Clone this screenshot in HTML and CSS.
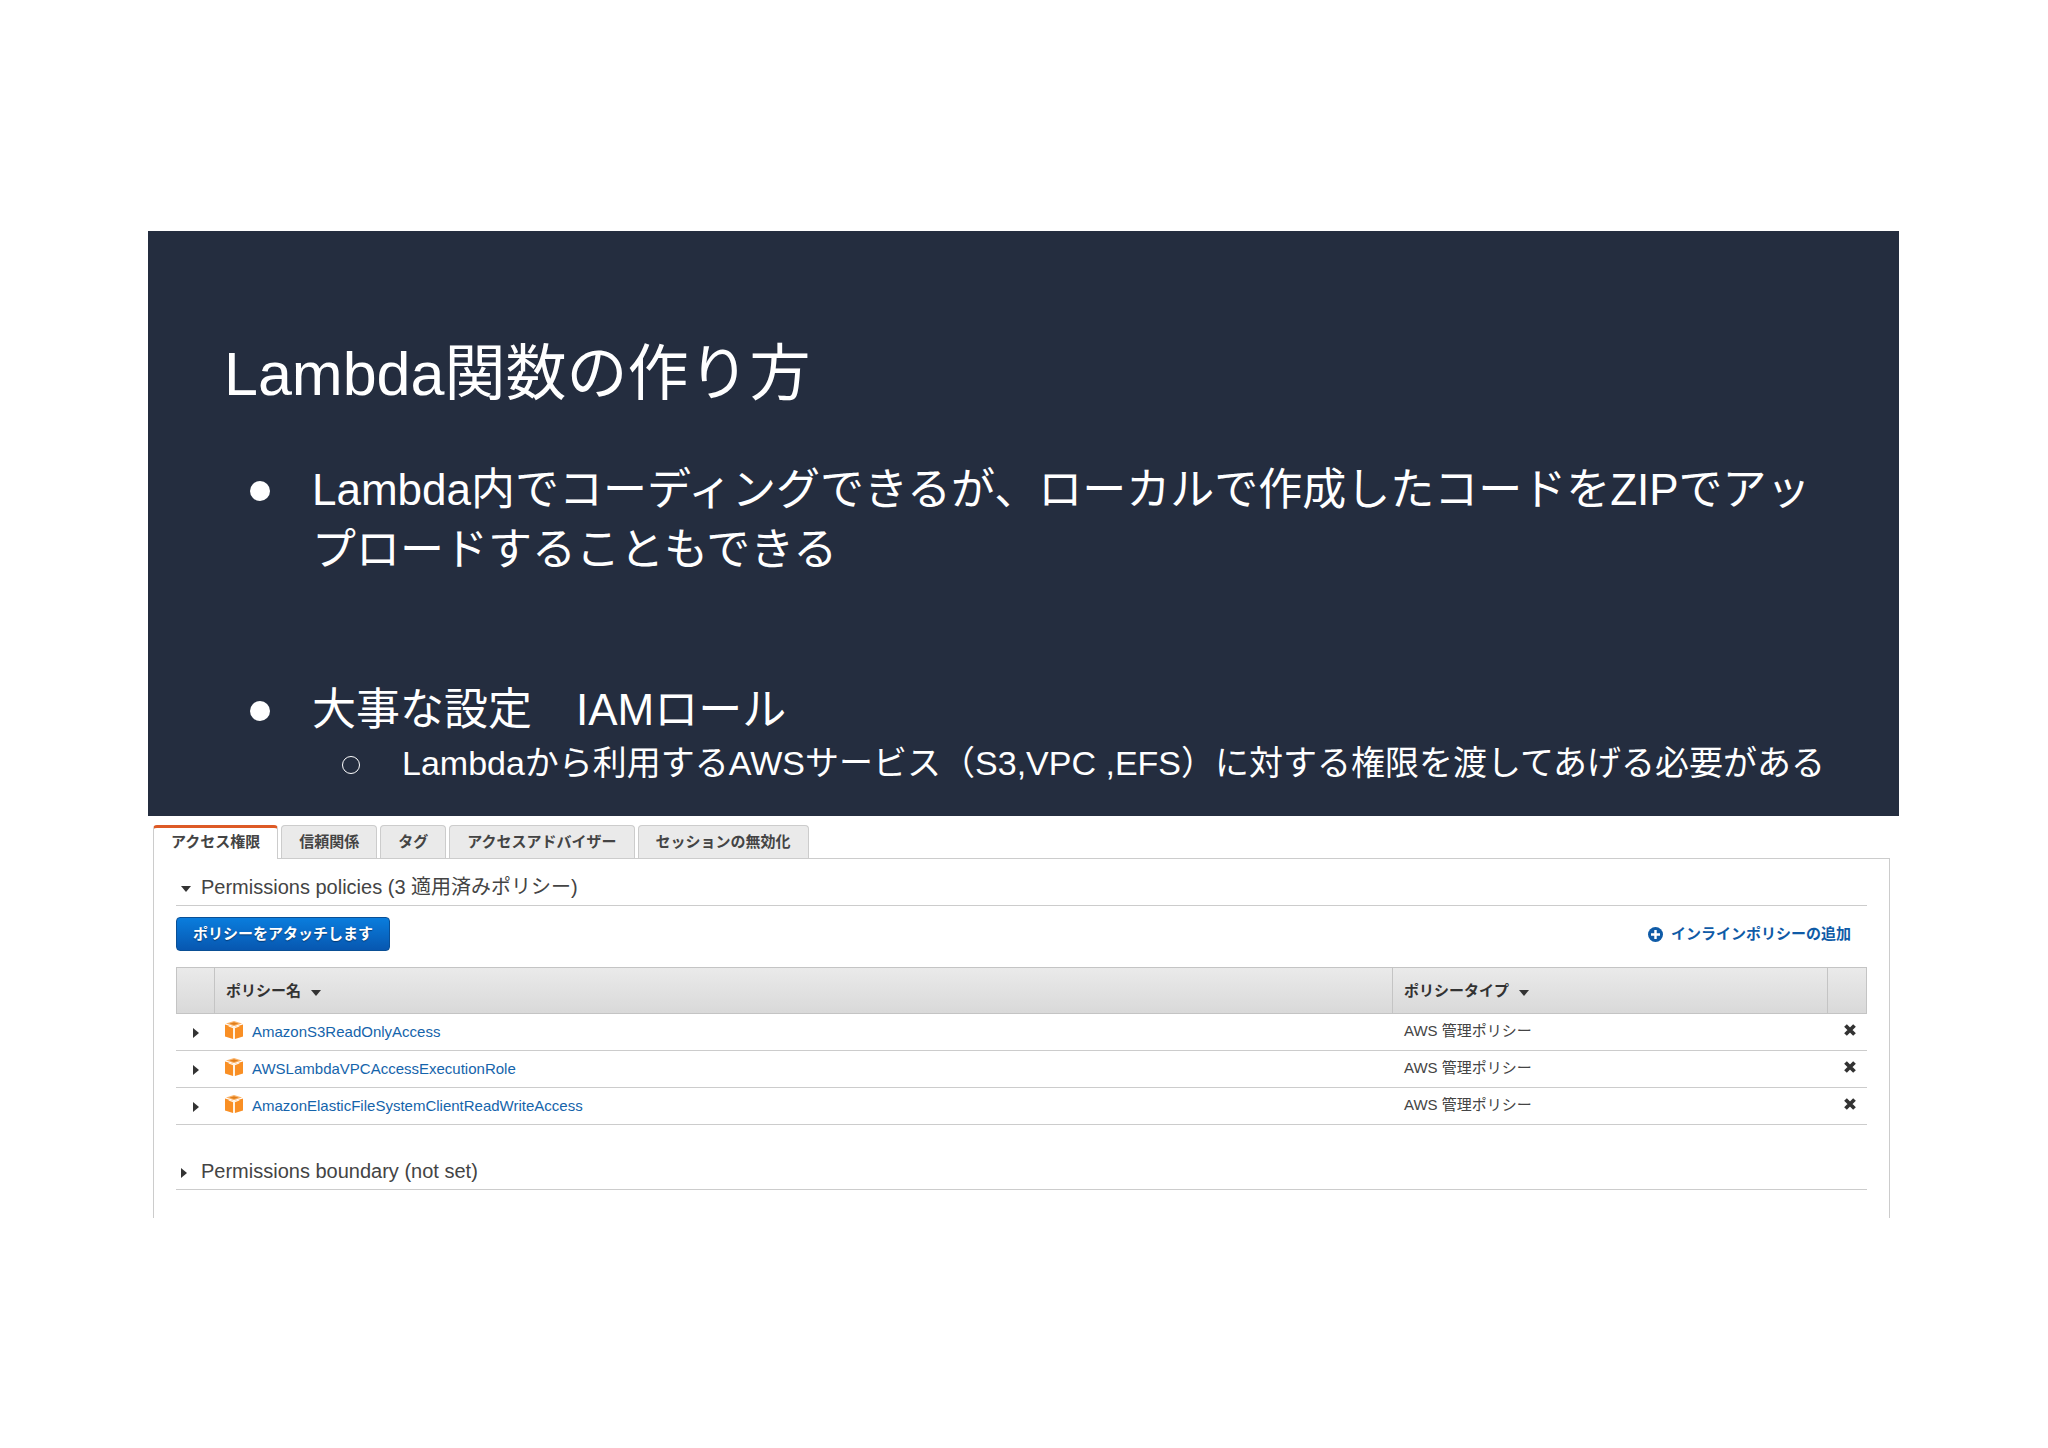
FILE: index.html
```html
<!DOCTYPE html>
<html lang="ja">
<head>
    <meta charset="UTF-8">
    <meta name="viewport" content="width=device-width, initial-scale=1.0">
    <title>Lambda関数の作り方</title>
    <link rel="stylesheet" href="styles.css">
</head>
<body>
    <svg class="sprite" aria-hidden="true">
        <symbol id="cube" viewBox="0 0 18 18">
            <path fill="#fbb46a" d="M9 0l8 2.6L9 5.2 1 2.6z"/>
            <path fill="#e07f1c" d="M9 1.2l4.6 1.5L9 4.1 4.4 2.7z"/>
            <path fill="#f98f24" d="M0 3.4l8 2.4V18L0 15.4z"/>
            <path fill="#f98f24" d="M18 3.4l-8 2.4V18l8-2.6z"/>
            <path fill="#fff3e4" d="M3.6 4.5L9 6.1l5.4-1.6v1.1L10 7.2V18H8V7.2L3.6 5.6z"/>
        </symbol>
        <symbol id="cross" viewBox="0 0 12 12">
            <path stroke="#333" stroke-width="3.8" d="M1.5 1.5l9 9M10.5 1.5l-9 9"/>
        </symbol>
        <symbol id="down" viewBox="0 0 10 6">
            <path fill="#333" d="M0 0h10L5 6z"/>
        </symbol>
        <symbol id="right" viewBox="0 0 6 10">
            <path fill="#333" d="M0 0v10l6-5z"/>
        </symbol>
    </svg>

    <main class="page">
        <section class="slide">
            <h1>Lambda関数の作り方</h1>
            <ul class="points">
                <li>Lambda内でコーディングできるが、ローカルで作成したコードをZIPでアップロードすることもできる</li>
                <li>大事な設定　IAMロール</li>
            </ul>
            <ul class="subpoints">
                <li>Lambdaから利用するAWSサービス（S3,VPC ,EFS）に対する権限を渡してあげる必要がある</li>
            </ul>
        </section>

        <section class="console">
            <div class="tabs" role="tablist">
                <button class="tab active" role="tab" aria-selected="true">アクセス権限</button>
                <button class="tab" role="tab">信頼関係</button>
                <button class="tab" role="tab">タグ</button>
                <button class="tab" role="tab">アクセスアドバイザー</button>
                <button class="tab" role="tab">セッションの無効化</button>
            </div>
            <div class="panel">
                <h2>
                    <button class="toggle" aria-expanded="true">
                        <span class="caret"><svg class="icon-down"><use href="#down"/></svg></span>Permissions policies (3 適用済みポリシー)
                    </button>
                </h2>
                <div class="actions">
                    <button class="btn-attach">ポリシーをアタッチします</button>
                    <a class="add-inline" href="#">
                        <svg class="icon-plus" viewBox="0 0 16 16"><circle cx="8" cy="8" r="8" fill="#0f5ba7"/><path stroke="#fff" stroke-width="2.6" d="M8 3.2v9.6M3.2 8h9.6"/></svg>
                        インラインポリシーの追加
                    </a>
                </div>
                <table class="policies">
                    <colgroup>
                        <col class="col-open">
                        <col>
                        <col class="col-type">
                        <col class="col-remove">
                    </colgroup>
                    <thead>
                        <tr>
                            <th></th>
                            <th>ポリシー名 <svg class="icon-down"><use href="#down"/></svg></th>
                            <th>ポリシータイプ <svg class="icon-down"><use href="#down"/></svg></th>
                            <th></th>
                        </tr>
                    </thead>
                    <tbody>
                        <tr>
                            <td class="open"><button aria-label="開く"><svg class="icon-right"><use href="#right"/></svg></button></td>
                            <td class="name-cell"><div class="name"><svg class="icon-cube"><use href="#cube"/></svg><a href="#">AmazonS3ReadOnlyAccess</a></div></td>
                            <td>AWS 管理ポリシー</td>
                            <td class="remove"><button aria-label="削除"><svg class="icon-cross"><use href="#cross"/></svg></button></td>
                        </tr>
                        <tr>
                            <td class="open"><button aria-label="開く"><svg class="icon-right"><use href="#right"/></svg></button></td>
                            <td class="name-cell"><div class="name"><svg class="icon-cube"><use href="#cube"/></svg><a href="#">AWSLambdaVPCAccessExecutionRole</a></div></td>
                            <td>AWS 管理ポリシー</td>
                            <td class="remove"><button aria-label="削除"><svg class="icon-cross"><use href="#cross"/></svg></button></td>
                        </tr>
                        <tr>
                            <td class="open"><button aria-label="開く"><svg class="icon-right"><use href="#right"/></svg></button></td>
                            <td class="name-cell"><div class="name"><svg class="icon-cube"><use href="#cube"/></svg><a href="#">AmazonElasticFileSystemClientReadWriteAccess</a></div></td>
                            <td>AWS 管理ポリシー</td>
                            <td class="remove"><button aria-label="削除"><svg class="icon-cross"><use href="#cross"/></svg></button></td>
                        </tr>
                    </tbody>
                </table>
                <h2>
                    <button class="toggle" aria-expanded="false">
                        <span class="caret"><svg class="icon-right"><use href="#right"/></svg></span>Permissions boundary (not set)
                    </button>
                </h2>
            </div>
        </section>
    </main>
</body>
</html>
```

FILE: styles.css
```css
* {
    box-sizing: border-box;
}
body {
    margin: 0;
    background: #fff;
    color: #444;
    font-family: "Liberation Sans", "Noto Sans CJK JP", sans-serif;
    font-size: 15px;
    line-height: 20px;
}
h1, h2, ul {
    margin: 0;
    padding: 0;
    font-weight: normal;
}
button {
    font-family: inherit;
    font-size: inherit;
    line-height: inherit;
    color: inherit;
    margin: 0;
    padding: 0;
    border: none;
    background: none;
    cursor: pointer;
}
a {
    color: #1564ab;
    text-decoration: none;
}
svg {
    display: block;
}
.sprite {
    display: none;
}
.page {
    padding: 231px 149px 0 148px;
}

/* slide */
.slide {
    background: #242d3f;
    color: #fff;
    padding: 103px 60px 30px 76px;
}
.slide h1 {
    font-size: 61px;
    line-height: 80px;
}
.slide ul {
    list-style: none;
}
.slide li {
    display: flex;
}
.slide li::before {
    content: "";
    flex: none;
    border-radius: 50%;
}
.points {
    margin-top: 46px;
    font-size: 44px;
    line-height: 60px;
}
.points li {
    padding-left: 26px;
}
.points li + li {
    margin-top: 100px;
}
.points li::before {
    width: 20px;
    height: 20px;
    margin: 21px 42px 0 0;
    background: #fff;
}
.subpoints {
    font-size: 34px;
    line-height: 46px;
}
.subpoints li {
    padding-left: 118px;
    white-space: nowrap;
}
.subpoints li::before {
    width: 16px;
    height: 16px;
    margin: 16px 42px 0 0;
    border: 1px solid #fff;
}

/* console */
.console {
    padding: 9px 9px 0 5px;
}
.tabs {
    display: flex;
    gap: 3px;
}
.tab {
    height: 33px;
    padding: 0 17px;
    border: 1px solid #ccc;
    border-bottom: none;
    border-radius: 4px 4px 0 0;
    background: #eaeaea;
    font-weight: bold;
}
.tab.active {
    height: 34px;
    margin-bottom: -1px;
    padding-bottom: 3px;
    border-top: 3px solid #dd5a26;
    background: #fff;
    z-index: 1;
}
.panel {
    border: 1px solid #ccc;
    border-bottom: none;
    padding: 13px 22px 28px;
}
.panel h2 {
    padding-bottom: 3px;
    border-bottom: 1px solid #ccc;
    font-size: 20px;
}
.toggle {
    display: flex;
    align-items: center;
    line-height: 30px;
}
.caret {
    width: 25px;
    padding: 4px 0 0 5px;
}
.icon-down {
    width: 10px;
    height: 6px;
}
.icon-right {
    width: 6px;
    height: 10px;
}
.actions {
    display: flex;
    align-items: center;
    justify-content: space-between;
    padding: 11px 16px 16px 0;
}
.btn-attach {
    height: 34px;
    padding: 0 16px;
    border: 1px solid #0a4f95;
    border-radius: 4px;
    background: linear-gradient(#0a7ddd, #0757b0);
    color: #fff;
    font-weight: bold;
    text-shadow: 0 1px 1px #033a75;
}
.add-inline {
    display: flex;
    align-items: center;
    gap: 8px;
    color: #0f5ba7;
    font-weight: bold;
}
.icon-plus {
    width: 15px;
    height: 15px;
}
.policies {
    width: 100%;
    margin-bottom: 31px;
    table-layout: fixed;
    border-collapse: separate;
    border-spacing: 0;
}
.col-open {
    width: 39px;
}
.col-type {
    width: 435px;
}
.col-remove {
    width: 39px;
}
.policies th {
    height: 47px;
    padding: 0 11px;
    border: 1px solid #c4c4c4;
    border-left: none;
    background: linear-gradient(#eaeaea, #d9d9d9);
    color: #333;
    text-align: left;
}
.policies th:first-child {
    border-left: 1px solid #c4c4c4;
}
.policies th .icon-down {
    display: inline-block;
    margin-left: 6px;
}
.policies td {
    height: 37px;
    padding: 0 11px 2px;
    border-bottom: 1px solid #ccc;
}
.policies .open {
    padding: 2px 0 0 17px;
}
.policies .name-cell {
    padding: 0 11px 0 10px;
}
.policies .remove {
    padding: 0 0 2px 16px;
}
.name {
    display: flex;
    align-items: center;
    gap: 9px;
}
.icon-cube {
    width: 18px;
    height: 18px;
    margin-bottom: 4px;
}
.icon-cross {
    width: 12px;
    height: 12px;
}
```
